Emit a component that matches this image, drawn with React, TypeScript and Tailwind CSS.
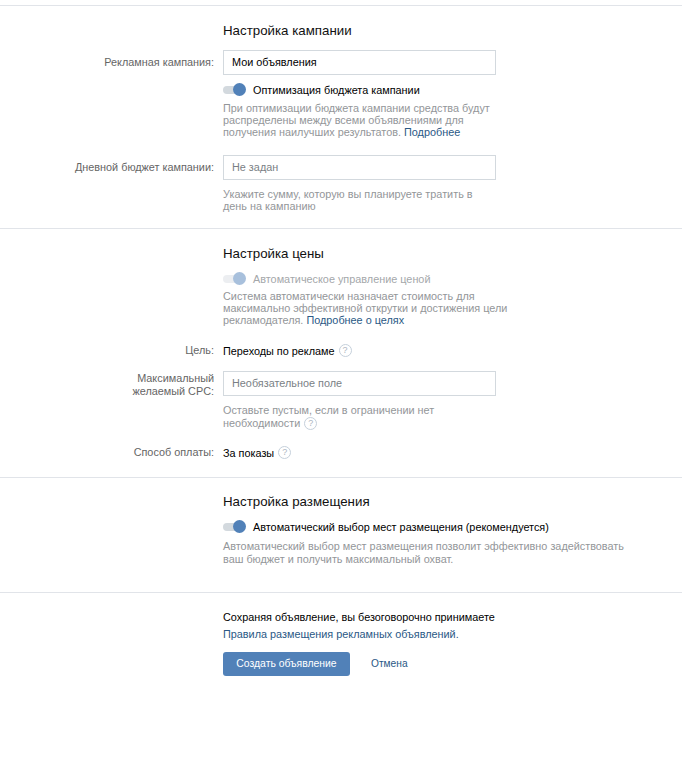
const font = { fontFamily: '"Liberation Sans", Arial, sans-serif' };

function Toggle({ muted }: { muted?: boolean }) {
  return (
    <span className={`relative block h-[8px] w-[22px] shrink-0 rounded-full ${muted ? "bg-[#eceef1]" : "bg-[#d3d9de]"}`}>
      <span className={`absolute right-[-1px] top-[-2.5px] h-[13px] w-[13px] rounded-full ${muted ? "bg-[#a8c0dc]" : "bg-[#5181b8]"}`} />
    </span>
  );
}

function Help() {
  return (
    <span className="inline-flex h-[13px] w-[13px] shrink-0 items-center justify-center rounded-full border border-[#c5d0db] text-[9px] leading-none text-[#aeb7c2]">
      ?
    </span>
  );
}

function Row({ label, className, children }: { label: React.ReactNode; className?: string; children: React.ReactNode }) {
  return (
    <div className={`flex ${className ?? ""}`}>
      <div className="w-[214px] shrink-0 text-right leading-[13px] text-[#656565]">{label}</div>
      <div className="ml-[9px] min-w-0">{children}</div>
    </div>
  );
}

function Field({ value, placeholder }: { value?: string; placeholder?: string }) {
  return (
    <div className={`flex h-[25px] w-[273px] items-center border border-[#d3d9de] bg-white pb-[1px] pl-[8px] ${placeholder ? "text-[#7a7f85]" : "text-black"}`}>
      {value ?? placeholder}
    </div>
  );
}

export default function App() {
  return (
    <div style={font} className="h-[763px] w-[686px] overflow-hidden bg-white text-[10.85px] leading-[12px] text-black antialiased">
      <div className="w-[682px] pt-[5px]">
        <section className="h-[223px] border-t border-[#e1e4e9]">
          <h2 className="ml-[223px] pt-[17px] text-[13.3px] leading-[16px] text-[#111]">Настройка кампании</h2>
          <Row label={<span className="relative top-[6px]">Рекламная кампания:</span>} className="mt-[11px]">
            <Field value="Мои объявления" />
          </Row>
          <div className="ml-[223px] mt-[8px] flex h-[13px] items-center gap-[8px]">
            <Toggle />
            <span>Оптимизация бюджета кампании</span>
          </div>
          <p className="ml-[223px] mt-[6px] w-[275px] leading-[12px] text-[#939699]">
            При оптимизации бюджета кампании средства будут распределены между всеми объявлениями для получения наилучших результатов. <span className="text-[#2a5885]">Подробнее</span>
          </p>
          <Row label={<span className="relative top-[6px]">Дневной бюджет кампании:</span>} className="mt-[17px]">
            <Field placeholder="Не задан" />
          </Row>
          <p className="ml-[223px] mt-[8px] w-[255px] leading-[12px] text-[#939699]">
            Укажите сумму, которую вы планируете тратить в день на кампанию
          </p>
        </section>

        <section className="h-[249px] border-t border-[#e1e4e9]">
          <h2 className="ml-[223px] pt-[17px] text-[13.3px] leading-[16px] text-[#111]">Настройка цены</h2>
          <div className="ml-[223px] mt-[10px] flex h-[13px] items-center gap-[8px]">
            <Toggle muted />
            <span className="text-[#a4a7aa]">Автоматическое управление ценой</span>
          </div>
          <p className="ml-[223px] mt-[5px] w-[290px] leading-[12px] text-[#939699]">
            Система автоматически назначает стоимость для максимально эффективной открутки и достижения цели рекламодателя. <span className="text-[#2a5885]">Подробнее о целях</span>
          </p>
          <Row label="Цель:" className="mt-[18px] items-center">
            <div className="flex items-center gap-[4px]">
              <span>Переходы по рекламе</span>
              <Help />
            </div>
          </Row>
          <Row label={<span className="relative top-[1px] block">Максимальный<br />желаемый CPC:</span>} className="mt-[14px]">
            <Field placeholder="Необязательное поле" />
          </Row>
          <div className="ml-[223px] mt-[7px] w-[270px] leading-[13px] text-[#939699]">
            <p>Оставьте пустым, если в ограничении нет</p>
            <p className="flex items-center gap-[4px]">необходимости <Help /></p>
          </div>
          <Row label="Способ оплаты:" className="mt-[16px] items-center">
            <div className="flex items-center gap-[4px]">
              <span>За показы</span>
              <Help />
            </div>
          </Row>
        </section>

        <section className="h-[115px] border-t border-[#e1e4e9] pl-[223px]">
          <h2 className="pt-[16px] text-[13.3px] leading-[16px] text-[#111]">Настройка размещения</h2>
          <div className="mt-[10px] flex h-[13px] items-center gap-[8px]">
            <Toggle />
            <span>Автоматический выбор мест размещения (рекомендуется)</span>
          </div>
          <p className="mt-[7px] w-[410px] leading-[13px] text-[#939699]">
            Автоматический выбор мест размещения позволит эффективно задействовать ваш бюджет и получить максимальный охват.
          </p>
        </section>

        <section className="border-t border-[#e1e4e9] pl-[223px]">
          <p className="mt-[18px] leading-[13px]">Сохраняя объявление, вы безоговорочно принимаете</p>
          <p className="mt-[4px] leading-[13px] text-[#2a5885]">Правила размещения рекламных объявлений.</p>
          <div className="mt-[11px] flex items-center">
            <button className="h-[24px] w-[127px] rounded-[3px] bg-[#5181b8] text-[10.4px] font-medium leading-[24px] text-white">Создать объявление</button>
            <span className="ml-[21px] text-[10.2px] text-[#2a5885]">Отмена</span>
          </div>
        </section>
      </div>
    </div>
  );
}
